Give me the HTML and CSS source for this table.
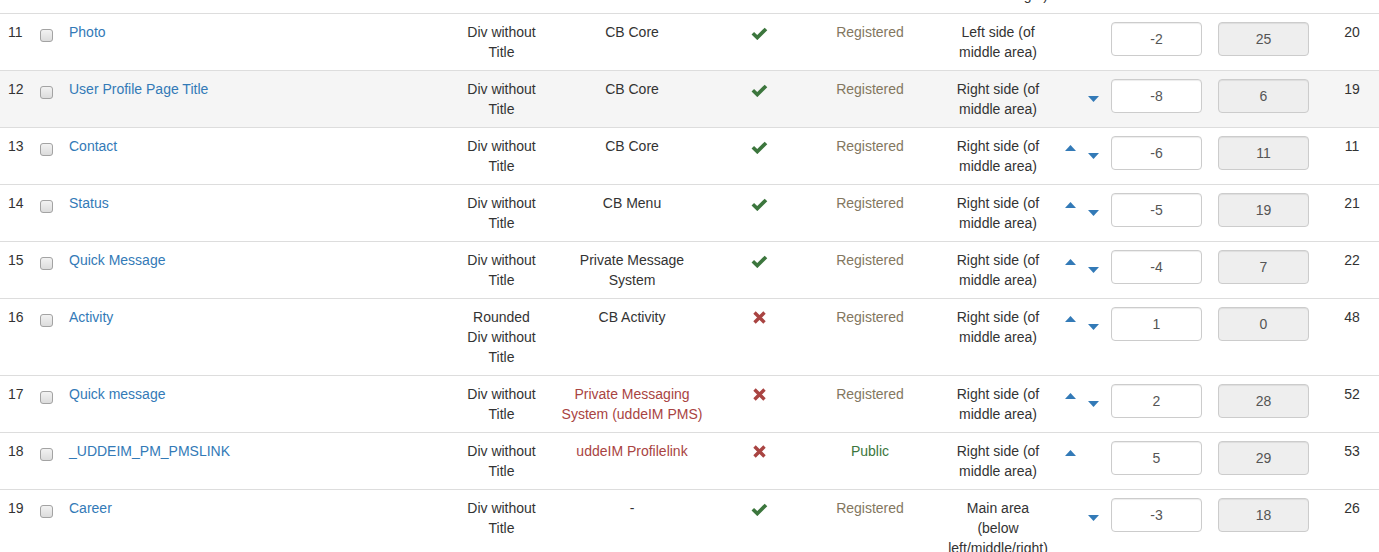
FILE: index.html
```html
<!DOCTYPE html>
<html>
<head>
<meta charset="utf-8">
<link rel="stylesheet" href="styles.css">
</head>
<body>
<div class="viewport">
<table class="fields">
<colgroup>
<col class="c-id"><col class="c-cb"><col class="c-name"><col class="c-disp"><col class="c-plug"><col class="c-pub"><col class="c-acc"><col class="c-pos"><col class="c-arr"><col class="c-ord"><col class="c-ord"><col class="c-num">
</colgroup>
<tbody>
<tr class="partial">
<td></td>
<td></td>
<td></td>
<td></td>
<td></td>
<td></td>
<td></td>
<td class="ctr">Main area (below left/middle/right)</td>
<td></td>
<td></td>
<td></td>
<td></td>
</tr>
<tr>
<td class="num">11</td>
<td><input type="checkbox" class="chk"></td>
<td><a href="#">Photo</a></td>
<td class="ctr">Div without Title</td>
<td class="ctr">CB Core</td>
<td class="ctr"><svg class="ok" width="17" height="13" viewBox="0 0 17 13"><path d="M1.8 6.2 L6.3 10.6 L15 1.9" fill="none" stroke="#3c763d" stroke-width="3.6"/></svg></td>
<td class="ctr acc-reg">Registered</td>
<td class="ctr">Left side (of middle area)</td>
<td class="arr"><span class="slot"></span><span class="slot"></span></td>
<td><input class="ord" type="text" value="-2"></td>
<td><input class="ord ro" type="text" value="25" readonly></td>
<td class="ctr">20</td>
</tr>
<tr class="hover">
<td class="num">12</td>
<td><input type="checkbox" class="chk"></td>
<td><a href="#">User Profile Page Title</a></td>
<td class="ctr">Div without Title</td>
<td class="ctr">CB Core</td>
<td class="ctr"><svg class="ok" width="17" height="13" viewBox="0 0 17 13"><path d="M1.8 6.2 L6.3 10.6 L15 1.9" fill="none" stroke="#3c763d" stroke-width="3.6"/></svg></td>
<td class="ctr acc-reg">Registered</td>
<td class="ctr">Right side (of middle area)</td>
<td class="arr"><span class="slot"></span><span class="slot"><svg class="down" width="11" height="6" viewBox="0 0 11 6"><path d="M0 0 H11 L5.5 6 Z" fill="#337ab7"/></svg></span></td>
<td><input class="ord" type="text" value="-8"></td>
<td><input class="ord ro" type="text" value="6" readonly></td>
<td class="ctr">19</td>
</tr>
<tr>
<td class="num">13</td>
<td><input type="checkbox" class="chk"></td>
<td><a href="#">Contact</a></td>
<td class="ctr">Div without Title</td>
<td class="ctr">CB Core</td>
<td class="ctr"><svg class="ok" width="17" height="13" viewBox="0 0 17 13"><path d="M1.8 6.2 L6.3 10.6 L15 1.9" fill="none" stroke="#3c763d" stroke-width="3.6"/></svg></td>
<td class="ctr acc-reg">Registered</td>
<td class="ctr">Right side (of middle area)</td>
<td class="arr"><span class="slot"><svg class="up" width="11" height="6" viewBox="0 0 11 6"><path d="M0 6 H11 L5.5 0 Z" fill="#337ab7"/></svg></span><span class="slot"><svg class="down" width="11" height="6" viewBox="0 0 11 6"><path d="M0 0 H11 L5.5 6 Z" fill="#337ab7"/></svg></span></td>
<td><input class="ord" type="text" value="-6"></td>
<td><input class="ord ro" type="text" value="11" readonly></td>
<td class="ctr">11</td>
</tr>
<tr>
<td class="num">14</td>
<td><input type="checkbox" class="chk"></td>
<td><a href="#">Status</a></td>
<td class="ctr">Div without Title</td>
<td class="ctr">CB Menu</td>
<td class="ctr"><svg class="ok" width="17" height="13" viewBox="0 0 17 13"><path d="M1.8 6.2 L6.3 10.6 L15 1.9" fill="none" stroke="#3c763d" stroke-width="3.6"/></svg></td>
<td class="ctr acc-reg">Registered</td>
<td class="ctr">Right side (of middle area)</td>
<td class="arr"><span class="slot"><svg class="up" width="11" height="6" viewBox="0 0 11 6"><path d="M0 6 H11 L5.5 0 Z" fill="#337ab7"/></svg></span><span class="slot"><svg class="down" width="11" height="6" viewBox="0 0 11 6"><path d="M0 0 H11 L5.5 6 Z" fill="#337ab7"/></svg></span></td>
<td><input class="ord" type="text" value="-5"></td>
<td><input class="ord ro" type="text" value="19" readonly></td>
<td class="ctr">21</td>
</tr>
<tr>
<td class="num">15</td>
<td><input type="checkbox" class="chk"></td>
<td><a href="#">Quick Message</a></td>
<td class="ctr">Div without Title</td>
<td class="ctr">Private Message System</td>
<td class="ctr"><svg class="ok" width="17" height="13" viewBox="0 0 17 13"><path d="M1.8 6.2 L6.3 10.6 L15 1.9" fill="none" stroke="#3c763d" stroke-width="3.6"/></svg></td>
<td class="ctr acc-reg">Registered</td>
<td class="ctr">Right side (of middle area)</td>
<td class="arr"><span class="slot"><svg class="up" width="11" height="6" viewBox="0 0 11 6"><path d="M0 6 H11 L5.5 0 Z" fill="#337ab7"/></svg></span><span class="slot"><svg class="down" width="11" height="6" viewBox="0 0 11 6"><path d="M0 0 H11 L5.5 6 Z" fill="#337ab7"/></svg></span></td>
<td><input class="ord" type="text" value="-4"></td>
<td><input class="ord ro" type="text" value="7" readonly></td>
<td class="ctr">22</td>
</tr>
<tr>
<td class="num">16</td>
<td><input type="checkbox" class="chk"></td>
<td><a href="#">Activity</a></td>
<td class="ctr">Rounded Div without Title</td>
<td class="ctr">CB Activity</td>
<td class="ctr"><svg class="no" width="13" height="13" viewBox="0 0 13 13"><path d="M1.5 1.5 L11.5 11.5 M11.5 1.5 L1.5 11.5" fill="none" stroke="#a94442" stroke-width="3.4"/></svg></td>
<td class="ctr acc-reg">Registered</td>
<td class="ctr">Right side (of middle area)</td>
<td class="arr"><span class="slot"><svg class="up" width="11" height="6" viewBox="0 0 11 6"><path d="M0 6 H11 L5.5 0 Z" fill="#337ab7"/></svg></span><span class="slot"><svg class="down" width="11" height="6" viewBox="0 0 11 6"><path d="M0 0 H11 L5.5 6 Z" fill="#337ab7"/></svg></span></td>
<td><input class="ord" type="text" value="1"></td>
<td><input class="ord ro" type="text" value="0" readonly></td>
<td class="ctr">48</td>
</tr>
<tr>
<td class="num">17</td>
<td><input type="checkbox" class="chk"></td>
<td><a href="#">Quick message</a></td>
<td class="ctr">Div without Title</td>
<td class="ctr danger">Private Messaging System (uddeIM PMS)</td>
<td class="ctr"><svg class="no" width="13" height="13" viewBox="0 0 13 13"><path d="M1.5 1.5 L11.5 11.5 M11.5 1.5 L1.5 11.5" fill="none" stroke="#a94442" stroke-width="3.4"/></svg></td>
<td class="ctr acc-reg">Registered</td>
<td class="ctr">Right side (of middle area)</td>
<td class="arr"><span class="slot"><svg class="up" width="11" height="6" viewBox="0 0 11 6"><path d="M0 6 H11 L5.5 0 Z" fill="#337ab7"/></svg></span><span class="slot"><svg class="down" width="11" height="6" viewBox="0 0 11 6"><path d="M0 0 H11 L5.5 6 Z" fill="#337ab7"/></svg></span></td>
<td><input class="ord" type="text" value="2"></td>
<td><input class="ord ro" type="text" value="28" readonly></td>
<td class="ctr">52</td>
</tr>
<tr>
<td class="num">18</td>
<td><input type="checkbox" class="chk"></td>
<td><a href="#">_UDDEIM_PM_PMSLINK</a></td>
<td class="ctr">Div without Title</td>
<td class="ctr danger">uddeIM Profilelink</td>
<td class="ctr"><svg class="no" width="13" height="13" viewBox="0 0 13 13"><path d="M1.5 1.5 L11.5 11.5 M11.5 1.5 L1.5 11.5" fill="none" stroke="#a94442" stroke-width="3.4"/></svg></td>
<td class="ctr acc-pub">Public</td>
<td class="ctr">Right side (of middle area)</td>
<td class="arr"><span class="slot"><svg class="up" width="11" height="6" viewBox="0 0 11 6"><path d="M0 6 H11 L5.5 0 Z" fill="#337ab7"/></svg></span><span class="slot"></span></td>
<td><input class="ord" type="text" value="5"></td>
<td><input class="ord ro" type="text" value="29" readonly></td>
<td class="ctr">53</td>
</tr>
<tr>
<td class="num">19</td>
<td><input type="checkbox" class="chk"></td>
<td><a href="#">Career</a></td>
<td class="ctr">Div without Title</td>
<td class="ctr">-</td>
<td class="ctr"><svg class="ok" width="17" height="13" viewBox="0 0 17 13"><path d="M1.8 6.2 L6.3 10.6 L15 1.9" fill="none" stroke="#3c763d" stroke-width="3.6"/></svg></td>
<td class="ctr acc-reg">Registered</td>
<td class="ctr">Main area (below left/middle/right)</td>
<td class="arr"><span class="slot"></span><span class="slot"><svg class="down" width="11" height="6" viewBox="0 0 11 6"><path d="M0 0 H11 L5.5 6 Z" fill="#337ab7"/></svg></span></td>
<td><input class="ord" type="text" value="-3"></td>
<td><input class="ord ro" type="text" value="18" readonly></td>
<td class="ctr">26</td>
</tr>
</tbody>
</table>
</div>
</body>
</html>
```
FILE: styles.css
```css
html, body {
  margin: 0;
  padding: 0;
  background: #fff;
  overflow: hidden;
}
body {
  font-family: "Liberation Sans", Arial, Helvetica, sans-serif;
  font-size: 14px;
  line-height: 20px;
  color: #333;
}
.viewport {
  width: 1379px;
  height: 552px;
  overflow: hidden;
}
.fields {
  border-collapse: collapse;
  border-spacing: 0;
  table-layout: fixed;
  width: 1387px;
  margin-top: -63px;
}
.c-id { width: 32px; }
.c-cb { width: 29px; }
.c-name { width: 394px; }
.c-disp { width: 93px; }
.c-plug { width: 168px; }
.c-pub { width: 86px; }
.c-acc { width: 136px; }
.c-pos { width: 120px; }
.c-arr { width: 45px; }
.c-ord { width: 107px; }
.c-num { width: 70px; }

.fields td {
  padding: 8px;
  border-top: 1px solid #ddd;
  vertical-align: top;
  text-align: left;
}
.fields tr.partial td {
  border-top: 0;
}
.fields tr.hover td {
  background: #f5f5f5;
}
.fields td.ctr {
  text-align: center;
}
.fields a {
  color: #337ab7;
  text-decoration: none;
}
.danger { color: #a94442; }
.acc-reg { color: #83775f; }
.acc-pub { color: #3c763d; }

.chk {
  appearance: none;
  -webkit-appearance: none;
  display: block;
  width: 13px;
  height: 13px;
  margin: 7px 0 0;
  box-sizing: border-box;
  border: 1px solid #a3a3a3;
  border-radius: 3px;
  background: linear-gradient(#f2f2f2, #dcdcdc);
}
.ok, .no {
  display: block;
  margin: 5px auto 0;
}
.no {
  margin-top: 4px;
}
.fields td.arr {
  padding: 8px 0 0 7px;
}
.arr {
  white-space: nowrap;
}
.slot {
  display: inline-block;
  width: 23px;
  height: 24px;
  vertical-align: top;
}
.up, .down {
  display: block;
}
.up { margin-top: 9px; }
.down { margin-top: 17px; }

.ord {
  display: block;
  box-sizing: border-box;
  width: 91px;
  height: 34px;
  padding: 6px 12px;
  margin: 0;
  font-family: "Liberation Sans", Arial, Helvetica, sans-serif;
  font-size: 14px;
  line-height: 20px;
  color: #555;
  text-align: center;
  background: #fff;
  border: 1px solid #ccc;
  border-radius: 4px;
  box-shadow: inset 0 1px 1px rgba(0, 0, 0, 0.075);
  outline: none;
}
.ord.ro {
  background: #eee;
}
```
